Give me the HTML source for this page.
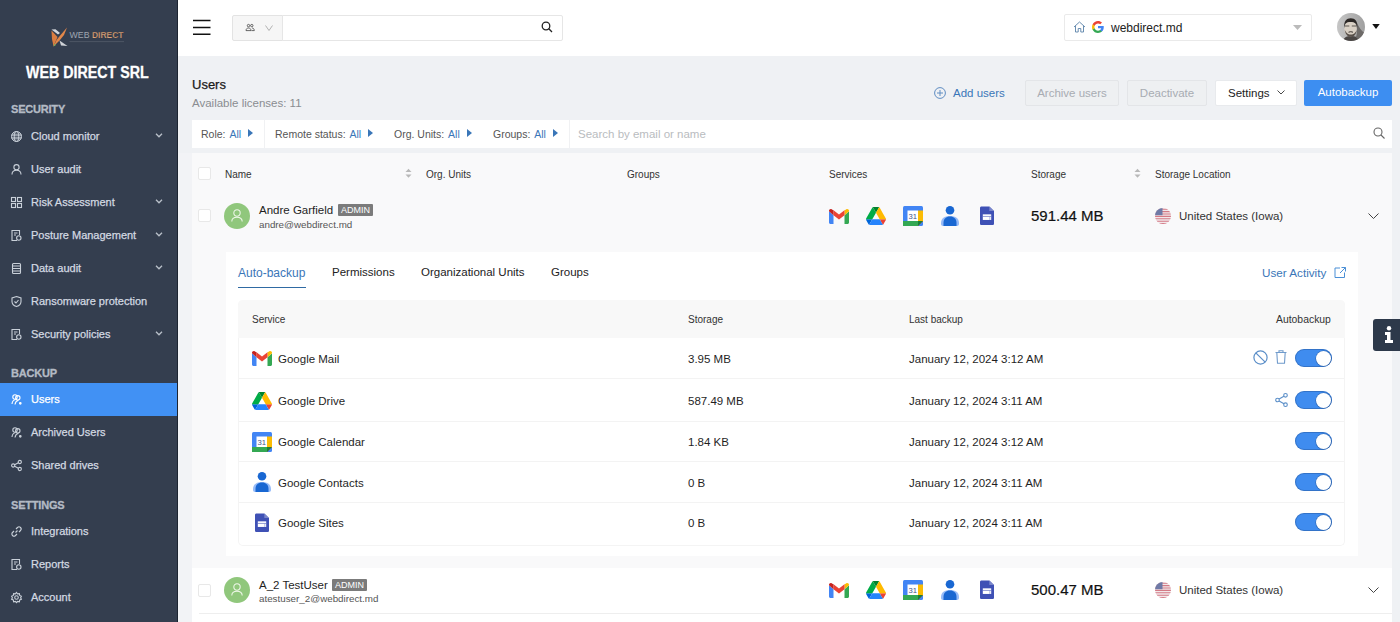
<!DOCTYPE html>
<html><head><meta charset="utf-8">
<style>
*{box-sizing:border-box;margin:0;padding:0}
html,body{width:1400px;height:622px;overflow:hidden;background:#eff1f4;font-family:"Liberation Sans",sans-serif;color:#222}
.a{position:absolute;white-space:nowrap}
svg{position:absolute;overflow:visible}
#sb{position:absolute;left:0;top:0;width:178px;height:622px;background:#343e4f;border-right:1px solid #1c2431}
.sh{position:absolute;left:11px;font-size:11px;font-weight:700;color:#b3bac4;letter-spacing:-0.2px;-webkit-text-stroke:0.3px currentColor}
.mi{position:absolute;left:0;width:177px;height:33px;color:#d3d9e1;font-size:11px;-webkit-text-stroke:0.25px currentColor}
.mi span{position:absolute;left:31px;top:10px}
.mi svg.ic{left:11px;top:11px}
.mi svg.ch{left:155px;top:13px}
.mi.act{background:#4191f4;color:#fff}
#hdr{position:absolute;left:178px;top:0;width:1222px;height:56px;background:#fff}
.btn{position:absolute;height:26px;border-radius:2px;font-size:11.5px;text-align:center;line-height:25px}
.flt{position:absolute;top:120px;height:28px;font-size:10.5px;color:#555;line-height:28px}
.flt b{font-weight:400;color:#3a76b8;margin-left:1px}
.th{position:absolute;font-size:10px;color:#333}
.cb{position:absolute;width:13px;height:13px;background:#fff;border:1px solid #e8e8e8;border-radius:2px}
.av{position:absolute;width:26px;height:26px;border-radius:50%;background:#90c77c}
.badge{position:absolute;height:12px;background:#7b7b7b;color:#fff;font-size:9px;line-height:12px;padding:0 3px;border-radius:1px}
.t115{font-size:11.5px;color:#1f1f1f}
.tog{position:absolute;left:1295px;width:37px;height:18px;border-radius:9px;background:#3f8cef;box-shadow:inset 0 0 0 1px rgba(30,70,130,.35)}
.tog:after{content:"";position:absolute;right:1.5px;top:1.5px;width:15px;height:15px;border-radius:50%;background:#fff;box-shadow:0 0 0 0.6px rgba(30,70,130,.5)}
</style></head><body>
<!-- SIDEBAR -->
<div id="sb">
  <svg style="left:50px;top:27px" width="76" height="22" viewBox="0 0 76 22">
    <path d="M1.5 2.5L8 7.5L10 6L5.5 2.3Z" fill="#d2d5da"/>
    <path d="M17 0.5L11 7.5L6.5 13L3.5 19.5L9.5 13.5L14 8Z" fill="#e2874a"/>
    <path d="M1.5 3.5L7.5 10L5 16L3.5 19.5L2 12Z" fill="#dc7d40"/>
    <path d="M9.5 13.5L17.5 19L11 18.5Z" fill="#cfd2d7"/>
    <path d="M3.5 19.5L4.5 16.5L6 18Z" fill="#7ab060"/>
    <text x="19.5" y="11.4" font-family="Liberation Sans" font-size="9.5" fill="#9ea5af" textLength="20" lengthAdjust="spacingAndGlyphs">WEB</text>
    <text x="42" y="11.4" font-family="Liberation Sans" font-size="9.8" font-weight="700" fill="#d9a47e" stroke="#4a3428" stroke-width="0.25" textLength="31.5" lengthAdjust="spacingAndGlyphs">DIRECT</text>
    <rect x="19.5" y="14.2" width="54.5" height="0.9" fill="#505968"/>
  </svg>
  <div class="a" style="left:26px;top:64px;font-size:16px;font-weight:700;color:#fff;-webkit-text-stroke:0.3px #fff;transform:scaleX(0.89);transform-origin:0 0">WEB DIRECT SRL</div>
  <div class="sh" style="top:103px">SECURITY</div>
  <div class="mi" style="top:120px"><svg class="ic" width="11" height="11" viewBox="0 0 11 11" fill="none" stroke="#c9d0d9" stroke-width="1"><circle cx="5.5" cy="5.5" r="5" fill="#c9d0d9" fill-opacity=".25"/><ellipse cx="5.5" cy="5.5" rx="2.2" ry="5"/><path d="M0.5 4H10.5M0.5 7H10.5"/></svg><span>Cloud monitor</span><svg class="ch" width="8" height="5" viewBox="0 0 8 5" fill="none" stroke="#b9c0ca" stroke-width="1.3"><path d="M1 0.8L4 3.8L7 0.8"/></svg></div>
  <div class="mi" style="top:153px"><svg class="ic" width="11" height="11" viewBox="0 0 11 11" fill="none" stroke="#c9d0d9" stroke-width="1.1"><circle cx="5.5" cy="3.2" r="2.6"/><path d="M1 10.5C1 7.5 3 6.3 5.5 6.3S10 7.5 10 10.5"/></svg><span>User audit</span></div>
  <div class="mi" style="top:186px"><svg class="ic" width="11" height="11" viewBox="0 0 11 11" fill="none" stroke="#c9d0d9" stroke-width="1.1"><rect x="0.5" y="0.5" width="4" height="4"/><rect x="6.5" y="0.5" width="4" height="4"/><rect x="0.5" y="6.5" width="4" height="4"/><rect x="6.5" y="6.5" width="4" height="4"/></svg><span>Risk Assessment</span><svg class="ch" width="8" height="5" viewBox="0 0 8 5" fill="none" stroke="#b9c0ca" stroke-width="1.3"><path d="M1 0.8L4 3.8L7 0.8"/></svg></div>
  <div class="mi" style="top:219px"><svg class="ic" width="11" height="11" viewBox="0 0 11 11" fill="none" stroke="#c9d0d9" stroke-width="1.1"><path d="M6 10.5H1V0.5H8.5V5"/><path d="M3 3H6.5M3 5H5"/><circle cx="7.8" cy="8" r="2.2"/></svg><span>Posture Management</span><svg class="ch" width="8" height="5" viewBox="0 0 8 5" fill="none" stroke="#b9c0ca" stroke-width="1.3"><path d="M1 0.8L4 3.8L7 0.8"/></svg></div>
  <div class="mi" style="top:252px"><svg class="ic" width="11" height="11" viewBox="0 0 11 11" fill="none" stroke="#c9d0d9" stroke-width="1.1"><rect x="1.5" y="0.5" width="8" height="10" rx="1"/><path d="M1.5 3H9.5M1.5 5.5H9.5M1.5 8H9.5"/></svg><span>Data audit</span><svg class="ch" width="8" height="5" viewBox="0 0 8 5" fill="none" stroke="#b9c0ca" stroke-width="1.3"><path d="M1 0.8L4 3.8L7 0.8"/></svg></div>
  <div class="mi" style="top:285px"><svg class="ic" width="11" height="11" viewBox="0 0 11 11" fill="none" stroke="#c9d0d9" stroke-width="1.1"><path d="M5.5 0.5L10 2V5.5C10 8 8 9.8 5.5 10.6C3 9.8 1 8 1 5.5V2Z"/><path d="M3.5 5.5L5 7L7.5 4"/></svg><span>Ransomware protection</span></div>
  <div class="mi" style="top:318px"><svg class="ic" width="11" height="11" viewBox="0 0 11 11" fill="none" stroke="#c9d0d9" stroke-width="1.1"><path d="M6 10.5H1V0.5H8.5V5"/><path d="M3 3H6.5M3 5H5"/><circle cx="7.8" cy="8" r="2.2"/></svg><span>Security policies</span><svg class="ch" width="8" height="5" viewBox="0 0 8 5" fill="none" stroke="#b9c0ca" stroke-width="1.3"><path d="M1 0.8L4 3.8L7 0.8"/></svg></div>
  <div class="sh" style="top:367px">BACKUP</div>
  <div class="mi act" style="top:383px"><svg class="ic" width="11" height="11" viewBox="0 0 11 11" fill="none" stroke="#fff" stroke-width="1.1"><circle cx="4" cy="3" r="2.2"/><circle cx="6.8" cy="3.8" r="2.2"/><path d="M1 10C1.2 7.5 2.5 6 4.5 5.5M4 10.5C4.3 8.3 5.5 6.8 7.5 6.3"/><circle cx="9.3" cy="9.3" r="0.8" fill="currentColor"/></svg><span>Users</span></div>
  <div class="mi" style="top:416px"><svg class="ic" width="11" height="11" viewBox="0 0 11 11" fill="none" stroke="#c9d0d9" stroke-width="1.1"><circle cx="4" cy="3" r="2.2"/><circle cx="6.8" cy="3.8" r="2.2"/><path d="M1 10C1.2 7.5 2.5 6 4.5 5.5M4 10.5C4.3 8.3 5.5 6.8 7.5 6.3"/><circle cx="9.3" cy="9.3" r="0.8" fill="currentColor"/></svg><span>Archived Users</span></div>
  <div class="mi" style="top:449px"><svg class="ic" width="11" height="11" viewBox="0 0 11 11" fill="none" stroke="#c9d0d9" stroke-width="1.1"><circle cx="2.2" cy="5.5" r="1.6"/><circle cx="8.8" cy="2" r="1.6"/><circle cx="8.8" cy="9" r="1.6"/><path d="M3.6 4.7L7.4 2.8M3.6 6.3L7.4 8.2"/></svg><span>Shared drives</span></div>
  <div class="sh" style="top:499px">SETTINGS</div>
  <div class="mi" style="top:515px"><svg class="ic" width="11" height="11" viewBox="0 0 11 11" fill="none" stroke="#c9d0d9" stroke-width="1.1"><path d="M4.5 6.5L6.5 4.5"/><path d="M5 3L6.5 1.5A2 2 0 0 1 9.5 4.5L8 6"/><path d="M6 8L4.5 9.5A2 2 0 0 1 1.5 6.5L3 5"/></svg><span>Integrations</span></div>
  <div class="mi" style="top:548px"><svg class="ic" width="11" height="11" viewBox="0 0 11 11" fill="none" stroke="#c9d0d9" stroke-width="1.1"><path d="M6 10.5H1V0.5H8.5V5"/><path d="M3 3H6.5M3 5H5"/><circle cx="7.8" cy="8" r="2.2"/></svg><span>Reports</span></div>
  <div class="mi" style="top:581px"><svg class="ic" width="11" height="11" viewBox="0 0 11 11" fill="none" stroke="#c9d0d9" stroke-width="1.1"><circle cx="5.5" cy="5.5" r="1.8"/><path d="M5.5 0.5L6.6 1.9L8.4 1.6L8.7 3.4L10.4 4.2L9.6 5.8L10.4 7.3L8.7 8L8.4 9.8L6.6 9.4L5.5 10.6L4.4 9.4L2.6 9.8L2.3 8L0.6 7.3L1.4 5.8L0.6 4.2L2.3 3.4L2.6 1.6L4.4 1.9Z"/></svg><span>Account</span></div>
</div>
<!-- HEADER -->

<div id="hdr"></div>
<svg style="left:193px;top:19px" width="18" height="16" viewBox="0 0 18 16"><path d="M0 1.5H17.5M0 8.5H17.5M0 15.2H17.5" stroke="#111" stroke-width="1.6"/></svg>
<div class="a" style="left:232px;top:15px;width:51px;height:26px;background:#f6f6f6;border:1px solid #e3e3e3;border-radius:2px 0 0 2px"></div>
<svg style="left:245px;top:24px" width="10" height="7" viewBox="0 0 10 7" fill="none" stroke="#444" stroke-width="0.8"><circle cx="3.5" cy="1.6" r="1.2"/><path d="M1 6.6C1 5 2 4 3.5 4S6 5 6 6.6Z"/><circle cx="6.8" cy="1.6" r="1.2"/><path d="M7 4C8.3 4 9.3 5 9.3 6.6H6.5"/></svg>
<svg style="left:265px;top:25px" width="8" height="6" viewBox="0 0 8 6" fill="none" stroke="#aaa" stroke-width="0.9"><path d="M0.5 0.5L4 5.5L7.5 0.5"/></svg>
<div class="a" style="left:282px;top:15px;width:281px;height:26px;background:#fff;border:1px solid #e6e6e6;border-radius:0 2px 2px 0"></div>
<svg style="left:541px;top:21px" width="12" height="12" viewBox="0 0 12 12" fill="none" stroke="#222" stroke-width="1.3"><circle cx="5" cy="5" r="3.8"/><path d="M7.8 7.8L11 11"/></svg>
<div class="a" style="left:1064px;top:14px;width:248px;height:27px;background:#fff;border:1px solid #eaeaea;border-radius:2px"></div>
<svg style="left:1073px;top:21px" width="13" height="12" viewBox="0 0 13 12" fill="none" stroke="#6288ad" stroke-width="0.95"><path d="M1 6L6.5 1L12 6"/><path d="M2.5 4.8V11H5.2V7.5H7.8V11H10.5V4.8"/></svg>
<svg style="left:1092px;top:21px" width="12" height="12" viewBox="0 0 24 24"><path d="M23.5 12.3c0-.8-.1-1.6-.2-2.3H12v4.5h6.5c-.3 1.5-1.1 2.8-2.4 3.6v3h3.8c2.3-2.1 3.6-5.1 3.6-8.8z" fill="#4285F4"/><path d="M12 24c3.2 0 6-1.1 7.9-2.9l-3.8-3c-1.1.7-2.4 1.2-4.1 1.2-3.1 0-5.8-2.1-6.7-5H1.3v3.1C3.3 21.3 7.3 24 12 24z" fill="#34A853"/><path d="M5.3 14.3c-.3-.7-.4-1.5-.4-2.3s.1-1.6.4-2.3V6.6H1.3C.5 8.2 0 10 0 12s.5 3.8 1.3 5.4l4-3.1z" fill="#FBBC05"/><path d="M12 4.8c1.8 0 3.3.6 4.6 1.8l3.4-3.4C17.9 1.2 15.2 0 12 0 7.3 0 3.3 2.7 1.3 6.6l4 3.1c.9-2.8 3.6-4.9 6.7-4.9z" fill="#EA4335"/></svg>
<div class="a" style="left:1111px;top:21px;font-size:12px;color:#222">webdirect.md</div>
<svg style="left:1293px;top:25px" width="9" height="5" viewBox="0 0 9 5"><path d="M0 0H9L4.5 5Z" fill="#bbb"/></svg>
<svg style="left:1337px;top:13px" width="28" height="28" viewBox="0 0 28 28"><defs><clipPath id="avc"><circle cx="14" cy="14" r="14"/></clipPath><linearGradient id="avg" x1="0" x2="1"><stop offset="0" stop-color="#c6c6c6"/><stop offset="1" stop-color="#a0a0a0"/></linearGradient></defs><g clip-path="url(#avc)"><rect width="28" height="28" fill="url(#avg)"/><path d="M6 28C7 24 10 23 14 23S21 24 23 28Z" fill="#4a4644"/><path d="M17 10C20 12 21 18 19 24L23 28H28V20C24 18 22 14 20 10Z" fill="#6d6a68"/><ellipse cx="13.5" cy="15.5" rx="6.2" ry="8" fill="#d9d0c4"/><path d="M7.3 15C6.6 8 9.5 5.3 13.8 5.3S20.8 8 20.2 14.5L19.3 10.8C17.5 9.3 15.5 9 13.5 9S9.5 9.3 8.2 11Z" fill="#2c2826"/><path d="M7.8 17C8.5 22 11 23.8 13.8 23.8S19 22 19.8 17L18.6 19C17.3 21 15.5 21.5 13.8 21.5S10.2 21 9 19Z" fill="#58504a"/><path d="M8 13H12.3M14.8 13H19.3" stroke="#5d5650" stroke-width="1.1"/><path d="M11.5 19.2Q13.8 18.2 16 19.2" stroke="#3a3430" stroke-width="1" fill="none"/></g></svg>
<svg style="left:1372px;top:24px" width="8" height="5" viewBox="0 0 9 6"><path d="M0 0H9L4.5 6Z" fill="#111"/></svg>



<div class="a" style="left:192px;top:77px;font-size:13px;color:#1a1a1a;-webkit-text-stroke:0.25px #1a1a1a">Users</div>
<div class="a" style="left:192px;top:97px;font-size:11.5px;color:#8a8d91">Available licenses: 11</div>
<svg style="left:934px;top:87px" width="12" height="12" viewBox="0 0 12 12" fill="none" stroke="#5f8dc2" stroke-width="1"><circle cx="6" cy="6" r="5.4"/><path d="M6 3V9M3 6H9"/></svg>
<div class="a" style="left:953px;top:87px;font-size:11.5px;color:#3a76b8">Add users</div>
<div class="btn" style="left:1025px;top:80px;width:94px;background:#eef0f2;border:1px solid #e3e5e8;color:#a8acb2">Archive users</div>
<div class="btn" style="left:1127px;top:80px;width:80px;background:#eef0f2;border:1px solid #e3e5e8;color:#a8acb2">Deactivate</div>
<div class="btn" style="left:1215px;top:80px;width:82px;background:#fff;border:1px solid #e8eaed;color:#222;text-align:left;padding-left:12px">Settings</div>
<svg style="left:1277px;top:90px" width="8" height="5" viewBox="0 0 8 5" fill="none" stroke="#333" stroke-width="0.9"><path d="M0.5 0.5L4 4L7.5 0.5"/></svg>
<div class="btn" style="left:1304px;top:80px;width:88px;background:#3d8ef1;color:#fff">Autobackup</div>

<div class="a" style="left:192px;top:120px;width:1200px;height:28px;background:#fff"></div>
<div class="a" style="left:264px;top:120px;width:1px;height:28px;background:#f0f1f3"></div>
<div class="a" style="left:569px;top:120px;width:1px;height:28px;background:#f0f1f3"></div>
<div class="flt" style="left:201px">Role: <b>All</b></div><svg style="left:248px;top:129px" width="5" height="8" viewBox="0 0 5 8"><path d="M0 0L5 4L0 8Z" fill="#3a76b8"/></svg>
<div class="flt" style="left:275px">Remote status: <b>All</b></div><svg style="left:368px;top:129px" width="5" height="8" viewBox="0 0 5 8"><path d="M0 0L5 4L0 8Z" fill="#3a76b8"/></svg>
<div class="flt" style="left:394px">Org. Units: <b>All</b></div><svg style="left:467px;top:129px" width="5" height="8" viewBox="0 0 5 8"><path d="M0 0L5 4L0 8Z" fill="#3a76b8"/></svg>
<div class="flt" style="left:493px">Groups: <b>All</b></div><svg style="left:553px;top:129px" width="5" height="8" viewBox="0 0 5 8"><path d="M0 0L5 4L0 8Z" fill="#3a76b8"/></svg>
<div class="a" style="left:578px;top:128px;font-size:11.5px;color:#b9bcc0">Search by email or name</div>
<svg style="left:1373px;top:127px" width="12" height="12" viewBox="0 0 12 12" fill="none" stroke="#666" stroke-width="1.1"><circle cx="5" cy="5" r="4"/><path d="M8 8L11.5 11.5"/></svg>

<div class="a" style="left:192px;top:153px;width:1200px;height:469px;background:#f9f9fa"></div>
<div class="cb" style="left:198px;top:167px"></div>
<div class="th" style="left:225px;top:169px">Name</div><svg style="left:405px;top:168px" width="7" height="11" viewBox="0 0 7 11"><path d="M0.5 4L3.5 0.8L6.5 4Z" fill="#b8b8b8"/><path d="M0.5 6.5L3.5 9.8L6.5 6.5Z" fill="#b8b8b8"/></svg>
<div class="th" style="left:426px;top:169px">Org. Units</div>
<div class="th" style="left:627px;top:169px">Groups</div>
<div class="th" style="left:829px;top:169px">Services</div>
<div class="th" style="left:1031px;top:169px">Storage</div><svg style="left:1134px;top:168px" width="7" height="11" viewBox="0 0 7 11"><path d="M0.5 4L3.5 0.8L6.5 4Z" fill="#b8b8b8"/><path d="M0.5 6.5L3.5 9.8L6.5 6.5Z" fill="#b8b8b8"/></svg>
<div class="th" style="left:1155px;top:169px">Storage Location</div>

<div class="cb" style="left:198px;top:209px"></div>
<div class="av" style="left:224px;top:203px"></div><svg style="left:231px;top:209px" width="12" height="13" viewBox="0 0 12 13" fill="none" stroke="#eef7e8" stroke-width="1.05"><circle cx="6" cy="4" r="3.2"/><path d="M.8 12.5C.8 9.5 3 8.2 6 8.2S11.2 9.5 11.2 12.5"/></svg>
<div class="a t115" style="left:259px;top:204px">Andre Garfield</div>
<div class="badge" style="left:338px;top:204px">ADMIN</div>
<div class="a" style="left:259px;top:219px;font-size:9.8px;color:#555">andre@webdirect.md</div>
<svg style="left:829px;top:209px" width="20" height="15" viewBox="0 0 20 15"><path d="M0 2.2V13.5C0 14.3.7 15 1.5 15H4.5V6.2L0 2.2Z" fill="#4285F4"/><path d="M15.5 15H18.5C19.3 15 20 14.3 20 13.5V2.2L15.5 6.2V15Z" fill="#34A853"/><path d="M15.5 1.2V6.2L20 2.2V1.8C20 .3 18.3-.5 17.1.4L15.5 1.2Z" fill="#FBBC04"/><path d="M4.5 6.2V1.2L10 5.5L15.5 1.2V6.2L10 10.5Z" fill="#EA4335"/><path d="M0 1.8V2.2L4.5 6.2V1.2L2.9.4C1.7-.5 0 .3 0 1.8Z" fill="#C5221F"/></svg><svg style="left:866px;top:207px" width="20" height="18" viewBox="0 0 87.3 78"><path d="m6.6 66.85 3.85 6.65c.8 1.4 1.950 2.5 3.3 3.3l13.75-23.8h-27.5c0 1.55.4 3.1 1.2 4.5z" fill="#0066da"/><path d="m43.65 25-13.75-23.8c-1.35.8-2.5 1.9-3.3 3.3l-25.4 44a9.06 9.06 0 0 0 -1.2 4.5h27.5z" fill="#00ac47"/><path d="m73.55 76.8c1.35-.8 2.5-1.9 3.3-3.3l1.6-2.75 7.65-13.25c.8-1.4 1.2-2.95 1.2-4.5h-27.502l5.852 11.5z" fill="#ea4335"/><path d="m43.65 25 13.750-23.8c-1.35-.8-2.9-1.2-4.5-1.2h-18.5c-1.6 0-3.15.45-4.5 1.2z" fill="#00832d"/><path d="m59.8 53h-32.3l-13.75 23.8c1.35.8 2.9 1.2 4.5 1.2h50.8c1.6 0 3.15-.45 4.5-1.2z" fill="#2684fc"/><path d="m73.4 26.5-12.7-22c-.8-1.4-1.95-2.5-3.3-3.3l-13.75 23.8 16.15 28h27.45c0-1.55-.4-3.1-1.2-4.5z" fill="#ffba00"/></svg><svg style="left:903px;top:206px" width="20" height="20" viewBox="0 0 20 20"><rect x="0" y="0" width="20" height="20" rx="1.5" fill="#4285F4"/><rect x="15" y="4.5" width="5" height="11" fill="#FBBC04"/><rect x="0" y="15" width="15" height="5" fill="#34A853"/><path d="M15 15H20L15 20Z" fill="#EA4335"/><path d="M15 20V15H20" fill="#188038"/><rect x="4.5" y="4.5" width="10.5" height="10.5" fill="#fff"/><text x="9.8" y="13.2" font-family="Liberation Sans" font-size="8" fill="#41558a" text-anchor="middle" textLength="8.5" lengthAdjust="spacingAndGlyphs">31</text></svg><svg style="left:941px;top:206px" width="18" height="20" viewBox="0 0 18 20"><circle cx="9" cy="4.3" r="4.3" fill="#1967D2"/><path d="M0 17C0 12.5 3.5 10 9 10S18 12.5 18 17V18C18 19.2 17.2 20 16 20H2C.8 20 0 19.2 0 18Z" fill="#4285F4" opacity=".55"/><path d="M2.5 17C2.5 12.8 5 10.5 9 10.5S15.5 12.8 15.5 17V20H2.5Z" fill="#1967D2"/></svg><svg style="left:980px;top:206px" width="14" height="19.5" viewBox="0 0 15 20"><path d="M1.5 0H10L15 5V18.5C15 19.3 14.3 20 13.5 20H1.5C.7 20 0 19.3 0 18.5V1.5C0 .7.7 0 1.5 0Z" fill="#3F51B5"/><path d="M10 0V5H15Z" fill="#7986cb"/><rect x="3" y="8.5" width="9" height="6" fill="#fff"/><rect x="3" y="10.2" width="9" height="1" fill="#3F51B5" opacity=".6"/><rect x="10" y="11" width="1" height="3.5" fill="#3F51B5" opacity=".4"/></svg>
<div class="a" style="left:1031px;top:207px;font-size:15px;color:#111;-webkit-text-stroke:0.2px #111">591.44 MB</div>
<svg style="left:1155px;top:208px" width="16" height="16" viewBox="0 0 16 16"><defs><clipPath id="fc1"><circle cx="8" cy="8" r="8"/></clipPath></defs><g clip-path="url(#fc1)"><rect width="16" height="16" fill="#f2e8ea"/><path d="M0 1.2H16M0 3.6H16M0 6H16M0 8.4H16M0 10.8H16M0 13.2H16M0 15.6H16" stroke="#d47a86" stroke-width="1.1"/><rect width="7.5" height="7.2" fill="#6f7aa6"/></g></svg>
<div class="a t115" style="left:1179px;top:210px;color:#333">United States (Iowa)</div>
<svg style="left:1368px;top:213px" width="11" height="6" viewBox="0 0 11 6" fill="none" stroke="#3a3a3a" stroke-width="0.95"><path d="M0.5 0.5L5.5 5.5L10.5 0.5"/></svg>

<div class="a" style="left:178px;top:153px;width:14px;height:469px;background:#f2f3f6"></div>
<div class="a" style="left:226px;top:252px;width:1132px;height:304px;background:#fff"></div>
<div class="a" style="left:238px;top:266px;font-size:12px;color:#3a76b8">Auto-backup</div>
<div class="a" style="left:238px;top:286.5px;width:68px;height:1.8px;background:#2f6aa3"></div>
<div class="a" style="left:332px;top:266px;font-size:11.5px;color:#222">Permissions</div>
<div class="a" style="left:421px;top:266px;font-size:11.5px;color:#222">Organizational Units</div>
<div class="a" style="left:551px;top:266px;font-size:11.5px;color:#222">Groups</div>
<div class="a" style="left:1262px;top:266px;font-size:11.7px;color:#3a76b8">User Activity</div>
<svg style="left:1334px;top:267px" width="12" height="11" viewBox="0 0 12 11" fill="none" stroke="#4a8fd6" stroke-width="1"><path d="M6 1H1V10.5H10.5V5.5"/><path d="M7.5 .5H11.5V4.5M11.5 .5L6 6"/></svg>

<div class="a" style="left:238px;top:300px;width:1107px;height:246px;border:1px solid #f4f4f4;border-top:none;border-radius:5px"></div>
<div class="a" style="left:238px;top:300px;width:1107px;height:38px;background:#f8f8f8;border-radius:5px 5px 0 0"></div>
<div class="th" style="left:252px;top:314px">Service</div>
<div class="th" style="left:688px;top:314px">Storage</div>
<div class="th" style="left:909px;top:314px">Last backup</div>
<div class="th" style="left:1276px;top:314px;font-size:10.4px">Autobackup</div>
<div class="a" style="left:239px;top:378px;width:1105px;height:1px;background:#f3f3f3"></div>
<div class="a" style="left:239px;top:421px;width:1105px;height:1px;background:#f3f3f3"></div>
<div class="a" style="left:239px;top:461px;width:1105px;height:1px;background:#f3f3f3"></div>
<div class="a" style="left:239px;top:502px;width:1105px;height:1px;background:#f3f3f3"></div>
<svg style="left:252px;top:351px" width="20" height="15" viewBox="0 0 20 15"><path d="M0 2.2V13.5C0 14.3.7 15 1.5 15H4.5V6.2L0 2.2Z" fill="#4285F4"/><path d="M15.5 15H18.5C19.3 15 20 14.3 20 13.5V2.2L15.5 6.2V15Z" fill="#34A853"/><path d="M15.5 1.2V6.2L20 2.2V1.8C20 .3 18.3-.5 17.1.4L15.5 1.2Z" fill="#FBBC04"/><path d="M4.5 6.2V1.2L10 5.5L15.5 1.2V6.2L10 10.5Z" fill="#EA4335"/><path d="M0 1.8V2.2L4.5 6.2V1.2L2.9.4C1.7-.5 0 .3 0 1.8Z" fill="#C5221F"/></svg><div class="a t115" style="left:278px;top:352.5px">Google Mail</div>
<div class="a t115" style="left:688px;top:352.5px">3.95 MB</div>
<div class="a t115" style="left:909px;top:352.5px">January 12, 2024 3:12 AM</div>
<div class="tog" style="top:349px"></div>
<svg style="left:252px;top:392px" width="20" height="18" viewBox="0 0 87.3 78"><path d="m6.6 66.85 3.85 6.65c.8 1.4 1.950 2.5 3.3 3.3l13.75-23.8h-27.5c0 1.55.4 3.1 1.2 4.5z" fill="#0066da"/><path d="m43.65 25-13.75-23.8c-1.35.8-2.5 1.9-3.3 3.3l-25.4 44a9.06 9.06 0 0 0 -1.2 4.5h27.5z" fill="#00ac47"/><path d="m73.55 76.8c1.35-.8 2.5-1.9 3.3-3.3l1.6-2.75 7.65-13.25c.8-1.4 1.2-2.95 1.2-4.5h-27.502l5.852 11.5z" fill="#ea4335"/><path d="m43.65 25 13.750-23.8c-1.35-.8-2.9-1.2-4.5-1.2h-18.5c-1.6 0-3.15.45-4.5 1.2z" fill="#00832d"/><path d="m59.8 53h-32.3l-13.75 23.8c1.35.8 2.9 1.2 4.5 1.2h50.8c1.6 0 3.15-.45 4.5-1.2z" fill="#2684fc"/><path d="m73.4 26.5-12.7-22c-.8-1.4-1.95-2.5-3.3-3.3l-13.75 23.8 16.15 28h27.45c0-1.55-.4-3.1-1.2-4.5z" fill="#ffba00"/></svg><div class="a t115" style="left:278px;top:394.5px">Google Drive</div>
<div class="a t115" style="left:688px;top:394.5px">587.49 MB</div>
<div class="a t115" style="left:909px;top:394.5px">January 12, 2024 3:11 AM</div>
<div class="tog" style="top:391px"></div>
<svg style="left:252px;top:432px" width="20" height="20" viewBox="0 0 20 20"><rect x="0" y="0" width="20" height="20" rx="1.5" fill="#4285F4"/><rect x="15" y="4.5" width="5" height="11" fill="#FBBC04"/><rect x="0" y="15" width="15" height="5" fill="#34A853"/><path d="M15 15H20L15 20Z" fill="#EA4335"/><path d="M15 20V15H20" fill="#188038"/><rect x="4.5" y="4.5" width="10.5" height="10.5" fill="#fff"/><text x="9.8" y="13.2" font-family="Liberation Sans" font-size="8" fill="#41558a" text-anchor="middle" textLength="8.5" lengthAdjust="spacingAndGlyphs">31</text></svg><div class="a t115" style="left:278px;top:435.5px">Google Calendar</div>
<div class="a t115" style="left:688px;top:435.5px">1.84 KB</div>
<div class="a t115" style="left:909px;top:435.5px">January 12, 2024 3:12 AM</div>
<div class="tog" style="top:432px"></div>
<svg style="left:253px;top:472px" width="18" height="20" viewBox="0 0 18 20"><circle cx="9" cy="4.3" r="4.3" fill="#1967D2"/><path d="M0 17C0 12.5 3.5 10 9 10S18 12.5 18 17V18C18 19.2 17.2 20 16 20H2C.8 20 0 19.2 0 18Z" fill="#4285F4" opacity=".55"/><path d="M2.5 17C2.5 12.8 5 10.5 9 10.5S15.5 12.8 15.5 17V20H2.5Z" fill="#1967D2"/></svg><div class="a t115" style="left:278px;top:476.5px">Google Contacts</div>
<div class="a t115" style="left:688px;top:476.5px">0 B</div>
<div class="a t115" style="left:909px;top:476.5px">January 12, 2024 3:11 AM</div>
<div class="tog" style="top:473px"></div>
<svg style="left:255px;top:513px" width="14" height="19.5" viewBox="0 0 15 20"><path d="M1.5 0H10L15 5V18.5C15 19.3 14.3 20 13.5 20H1.5C.7 20 0 19.3 0 18.5V1.5C0 .7.7 0 1.5 0Z" fill="#3F51B5"/><path d="M10 0V5H15Z" fill="#7986cb"/><rect x="3" y="8.5" width="9" height="6" fill="#fff"/><rect x="3" y="10.2" width="9" height="1" fill="#3F51B5" opacity=".6"/><rect x="10" y="11" width="1" height="3.5" fill="#3F51B5" opacity=".4"/></svg><div class="a t115" style="left:278px;top:516.5px">Google Sites</div>
<div class="a t115" style="left:688px;top:516.5px">0 B</div>
<div class="a t115" style="left:909px;top:516.5px">January 12, 2024 3:11 AM</div>
<div class="tog" style="top:513px"></div>

<svg style="left:1253px;top:350px" width="15" height="15" viewBox="0 0 15 15" fill="none" stroke="#5a8ec8" stroke-width="1.2"><circle cx="7.5" cy="7.5" r="6.6"/><path d="M2.8 2.8L12.2 12.2"/></svg>
<svg style="left:1275px;top:350px" width="12" height="14" viewBox="0 0 12 14" fill="none" stroke="#6f9acb" stroke-width="1.1"><path d="M.5 2.5H11.5M4 2.5V.8H8V2.5M1.8 2.5L2.5 13.2H9.5L10.2 2.5"/></svg>
<svg style="left:1275px;top:393px" width="13" height="14" viewBox="0 0 13 14" fill="none" stroke="#5a8ec8" stroke-width="1.1"><circle cx="2.5" cy="7" r="1.8"/><circle cx="10.5" cy="2.3" r="1.8"/><circle cx="10.5" cy="11.7" r="1.8"/><path d="M4.1 6L8.9 3.3M4.1 8L8.9 10.7"/></svg>
<div class="a" style="left:1373px;top:319px;width:27px;height:32px;background:#2d394a;border-radius:3px 0 0 3px"></div>
<svg style="left:1384px;top:326px" width="10" height="17" viewBox="0 0 10 17"><circle cx="5" cy="2.2" r="2.2" fill="#fff"/><path d="M1 6H6.5V14H9V17H1V14H3V9H1Z" fill="#fff"/></svg>

<div class="a" style="left:192px;top:568px;width:1200px;height:54px;background:#fff"></div>
<div class="a" style="left:199px;top:613px;width:1193px;height:1px;background:#eeeeee"></div>
<div class="cb" style="left:198px;top:584px"></div>
<div class="av" style="left:224px;top:577px"></div><svg style="left:231px;top:583px" width="12" height="13" viewBox="0 0 12 13" fill="none" stroke="#eef7e8" stroke-width="1.05"><circle cx="6" cy="4" r="3.2"/><path d="M.8 12.5C.8 9.5 3 8.2 6 8.2S11.2 9.5 11.2 12.5"/></svg>
<div class="a t115" style="left:259px;top:579px">A_2 TestUser</div>
<div class="badge" style="left:332px;top:579px">ADMIN</div>
<div class="a" style="left:259px;top:593px;font-size:9.8px;color:#555">atestuser_2@webdirect.md</div>
<svg style="left:829px;top:583px" width="20" height="15" viewBox="0 0 20 15"><path d="M0 2.2V13.5C0 14.3.7 15 1.5 15H4.5V6.2L0 2.2Z" fill="#4285F4"/><path d="M15.5 15H18.5C19.3 15 20 14.3 20 13.5V2.2L15.5 6.2V15Z" fill="#34A853"/><path d="M15.5 1.2V6.2L20 2.2V1.8C20 .3 18.3-.5 17.1.4L15.5 1.2Z" fill="#FBBC04"/><path d="M4.5 6.2V1.2L10 5.5L15.5 1.2V6.2L10 10.5Z" fill="#EA4335"/><path d="M0 1.8V2.2L4.5 6.2V1.2L2.9.4C1.7-.5 0 .3 0 1.8Z" fill="#C5221F"/></svg><svg style="left:866px;top:581px" width="20" height="18" viewBox="0 0 87.3 78"><path d="m6.6 66.85 3.85 6.65c.8 1.4 1.950 2.5 3.3 3.3l13.75-23.8h-27.5c0 1.55.4 3.1 1.2 4.5z" fill="#0066da"/><path d="m43.65 25-13.75-23.8c-1.35.8-2.5 1.9-3.3 3.3l-25.4 44a9.06 9.06 0 0 0 -1.2 4.5h27.5z" fill="#00ac47"/><path d="m73.55 76.8c1.35-.8 2.5-1.9 3.3-3.3l1.6-2.75 7.65-13.25c.8-1.4 1.2-2.95 1.2-4.5h-27.502l5.852 11.5z" fill="#ea4335"/><path d="m43.65 25 13.750-23.8c-1.35-.8-2.9-1.2-4.5-1.2h-18.5c-1.6 0-3.15.45-4.5 1.2z" fill="#00832d"/><path d="m59.8 53h-32.3l-13.75 23.8c1.35.8 2.9 1.2 4.5 1.2h50.8c1.6 0 3.15-.45 4.5-1.2z" fill="#2684fc"/><path d="m73.4 26.5-12.7-22c-.8-1.4-1.95-2.5-3.3-3.3l-13.75 23.8 16.15 28h27.45c0-1.55-.4-3.1-1.2-4.5z" fill="#ffba00"/></svg><svg style="left:903px;top:580px" width="20" height="20" viewBox="0 0 20 20"><rect x="0" y="0" width="20" height="20" rx="1.5" fill="#4285F4"/><rect x="15" y="4.5" width="5" height="11" fill="#FBBC04"/><rect x="0" y="15" width="15" height="5" fill="#34A853"/><path d="M15 15H20L15 20Z" fill="#EA4335"/><path d="M15 20V15H20" fill="#188038"/><rect x="4.5" y="4.5" width="10.5" height="10.5" fill="#fff"/><text x="9.8" y="13.2" font-family="Liberation Sans" font-size="8" fill="#41558a" text-anchor="middle" textLength="8.5" lengthAdjust="spacingAndGlyphs">31</text></svg><svg style="left:941px;top:580px" width="18" height="20" viewBox="0 0 18 20"><circle cx="9" cy="4.3" r="4.3" fill="#1967D2"/><path d="M0 17C0 12.5 3.5 10 9 10S18 12.5 18 17V18C18 19.2 17.2 20 16 20H2C.8 20 0 19.2 0 18Z" fill="#4285F4" opacity=".55"/><path d="M2.5 17C2.5 12.8 5 10.5 9 10.5S15.5 12.8 15.5 17V20H2.5Z" fill="#1967D2"/></svg><svg style="left:980px;top:580px" width="14" height="19.5" viewBox="0 0 15 20"><path d="M1.5 0H10L15 5V18.5C15 19.3 14.3 20 13.5 20H1.5C.7 20 0 19.3 0 18.5V1.5C0 .7.7 0 1.5 0Z" fill="#3F51B5"/><path d="M10 0V5H15Z" fill="#7986cb"/><rect x="3" y="8.5" width="9" height="6" fill="#fff"/><rect x="3" y="10.2" width="9" height="1" fill="#3F51B5" opacity=".6"/><rect x="10" y="11" width="1" height="3.5" fill="#3F51B5" opacity=".4"/></svg>
<div class="a" style="left:1031px;top:581px;font-size:15px;color:#111;-webkit-text-stroke:0.2px #111">500.47 MB</div>
<svg style="left:1155px;top:582px" width="16" height="16" viewBox="0 0 16 16"><defs><clipPath id="fc2"><circle cx="8" cy="8" r="8"/></clipPath></defs><g clip-path="url(#fc2)"><rect width="16" height="16" fill="#f2e8ea"/><path d="M0 1.2H16M0 3.6H16M0 6H16M0 8.4H16M0 10.8H16M0 13.2H16M0 15.6H16" stroke="#d47a86" stroke-width="1.1"/><rect width="7.5" height="7.2" fill="#6f7aa6"/></g></svg>
<div class="a t115" style="left:1179px;top:584px;color:#333">United States (Iowa)</div>
<svg style="left:1368px;top:587px" width="11" height="6" viewBox="0 0 11 6" fill="none" stroke="#3a3a3a" stroke-width="0.95"><path d="M0.5 0.5L5.5 5.5L10.5 0.5"/></svg>
</body></html>
